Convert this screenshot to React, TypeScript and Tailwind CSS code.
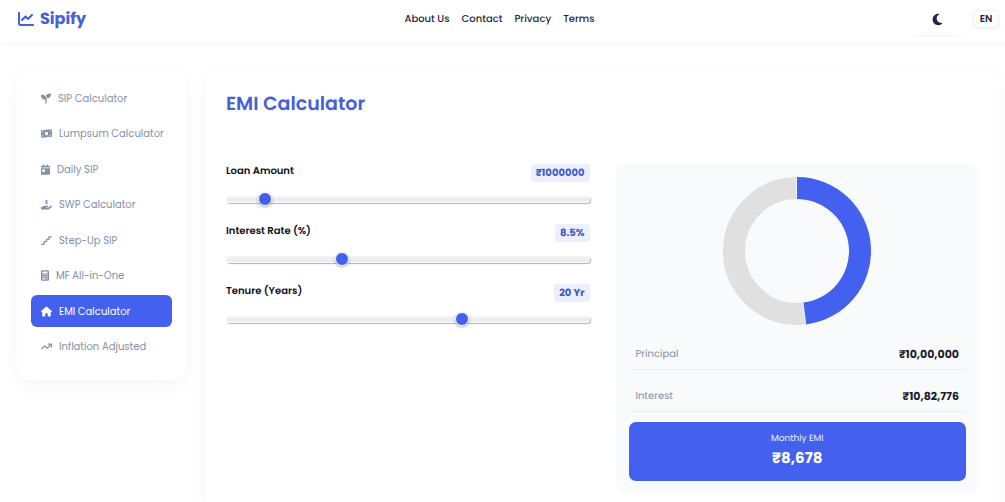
import { useState } from "react";
import type { IconType } from "react-icons";
import {
  FaArrowTrendUp,
  FaCalculator,
  FaCalendarDay,
  FaChartLine,
  FaHandHoldingDollar,
  FaHouse,
  FaMoneyBillWave,
  FaMoon,
  FaSeedling,
  FaStairs,
} from "react-icons/fa6";

const pages = ["About Us", "Contact", "Privacy", "Terms"];

const calculators: { name: string; icon: IconType; width: string }[] = [
  { name: "SIP Calculator", icon: FaSeedling, width: "w-[10px]" },
  { name: "Lumpsum Calculator", icon: FaMoneyBillWave, width: "w-[11px]" },
  { name: "Daily SIP", icon: FaCalendarDay, width: "w-[9px]" },
  { name: "SWP Calculator", icon: FaHandHoldingDollar, width: "w-[11px]" },
  { name: "Step-Up SIP", icon: FaStairs, width: "w-[11px]" },
  { name: "MF All-in-One", icon: FaCalculator, width: "w-[8px]" },
  { name: "EMI Calculator", icon: FaHouse, width: "w-[11px]" },
  { name: "Inflation Adjusted", icon: FaArrowTrendUp, width: "w-[11px]" },
];

const rupees = (n: number) => "₹" + Math.round(n).toLocaleString("en-IN");

function Header() {
  return (
    <header className="flex h-[42px] items-center justify-between bg-white pr-1.5 pl-[18px] shadow-[0_2px_6px_rgba(0,0,0,0.04)]">
      <a href="#home" className="flex items-center gap-1.5 pb-1 text-[16px] leading-6 font-bold text-[#4560d8]">
        <FaChartLine className="size-4" />
        Sipify
      </a>
      <nav className="flex gap-3 pb-1 text-[10px] leading-4 font-medium text-[#1f2937]">
        {pages.map((p) => (
          <a key={p} href={"#" + p.toLowerCase().replace(" ", "-")}>
            {p}
          </a>
        ))}
      </nav>
      <div className="flex items-center gap-2.5 pb-1">
        <button
          type="button"
          aria-label="Toggle dark mode"
          className="flex h-8 w-[50px] items-center justify-center rounded-[4px] text-[#1f2544] shadow-[0_1px_1px_rgba(0,0,0,0.05)]"
        >
          <FaMoon className="size-[13px]" />
        </button>
        <button
          type="button"
          className="h-[18px] w-[26px] rounded-[4px] border border-[#f0f0f2] bg-white text-[10px] leading-4 font-semibold text-[#1f2544] shadow-[0_1px_2px_rgba(0,0,0,0.06)]"
        >
          EN
        </button>
      </div>
    </header>
  );
}

function Sidebar({ active, onSelect }: { active: string; onSelect: (name: string) => void }) {
  return (
    <aside className="w-[169px] shrink-0 self-start rounded-[14px] bg-white px-3.5 pt-[13px] pb-[17px] shadow-[0_6px_20px_rgba(0,0,0,0.04)]">
      <ul className="flex min-h-[281px] flex-col justify-between">
        {calculators.map(({ name, icon: Icon, width }) => (
          <li key={name}>
            <button
              type="button"
              onClick={() => onSelect(name)}
              className={
                "flex h-8 w-full items-center gap-[7px] rounded-md px-2.5 text-left text-[10px] whitespace-nowrap " +
                (name === active ? "bg-[#4361ee] text-white" : "text-[#8490a5]")
              }
            >
              <Icon className={"h-[11px] shrink-0 " + width} />
              {name}
            </button>
          </li>
        ))}
      </ul>
    </aside>
  );
}

type FieldProps = {
  id: string;
  label: string;
  display: string;
  min: number;
  max: number;
  step: number;
  value: number;
  onChange: (n: number) => void;
};

function Field({ id, label, display, min, max, step, value, onChange }: FieldProps) {
  return (
    <div className="flex flex-col gap-[9px]">
      <div className="flex items-start justify-between">
        <label htmlFor={id} className="text-[10px] leading-[14px] font-semibold text-[#0b0f1a]">
          {label}
        </label>
        <output
          htmlFor={id}
          className="rounded-[3px] bg-[#ebefff] px-[5px] text-[10px] leading-[18px] font-bold text-[#4059c4]"
        >
          {display}
        </output>
      </div>
      <div className="flex h-4 items-center">
        <input
          id={id}
          type="range"
          min={min}
          max={max}
          step={step}
          value={value}
          onChange={(e) => onChange(Number(e.target.value))}
          className="h-[7px] w-full cursor-pointer appearance-none rounded-full bg-[#ebedf0] shadow-[inset_0_2px_0_#f4f4f5,inset_0_-1px_0_#fafafa,1px_1px_1px_#b4b4b4] outline-none [&::-webkit-slider-thumb]:size-3.5 [&::-webkit-slider-thumb]:appearance-none [&::-webkit-slider-thumb]:rounded-full [&::-webkit-slider-thumb]:border-[1px] [&::-webkit-slider-thumb]:border-solid [&::-webkit-slider-thumb]:border-white [&::-webkit-slider-thumb]:bg-[#4361ee] [&::-webkit-slider-thumb]:shadow-[0_1px_3px_rgba(0,0,0,0.3)]"
        />
      </div>
    </div>
  );
}

function Donut({ share }: { share: number }) {
  const a = share * 2 * Math.PI;
  const point = (r: number, t: number) => `${74 + r * Math.sin(t)} ${74 - r * Math.cos(t)}`;
  const large = share > 0.5 ? 1 : 0;
  const arc = `M${point(74, 0)}A74 74 0 ${large} 1 ${point(74, a)}L${point(52, a)}A52 52 0 ${large} 0 ${point(52, 0)}Z`;
  return (
    <svg viewBox="0 0 148 148" className="mx-auto size-[148px]" role="img" aria-label="Principal and interest shares">
      <circle cx="74" cy="74" r="63" fill="none" stroke="#e0e0e0" strokeWidth="22" />
      <path d={`M${point(52, 0)}L${point(74, 0)}M${point(52, a)}L${point(74, a)}`} stroke="#ffffff" strokeWidth="1" />
      <path d={arc} fill="#4361ee" />
    </svg>
  );
}

function ResultRow({ name, value }: { name: string; value: string }) {
  return (
    <div className="flex items-center justify-between border-b border-[#eceef1] px-[7px] pt-[11px] pb-[7px]">
      <dt className="text-[10px] leading-4 text-[#8490a5]">{name}</dt>
      <dd className="text-[11px] leading-4 font-bold text-[#1a1d2e]">{value}</dd>
    </div>
  );
}

export default function App() {
  const [active, setActive] = useState("EMI Calculator");
  const [loan, setLoan] = useState(1000000);
  const [rate, setRate] = useState(8.5);
  const [years, setYears] = useState(20);

  const monthly = rate / 1200;
  const growth = Math.pow(1 + monthly, years * 12);
  const emi = (loan * monthly * growth) / (growth - 1);
  const interest = emi * years * 12 - loan;

  return (
    <div className="flex min-h-screen flex-col bg-white font-['Poppins','Inter','Noto_Sans',sans-serif] [text-rendering:geometricPrecision]">
      <Header />
      <div className="flex grow gap-5 pt-[27px] pr-1.5 pl-[17px]">
        <Sidebar active={active} onSelect={setActive} />
        <main className="grow rounded-t-[14px] bg-white px-5 pt-[21px] pb-2 shadow-[0_6px_20px_rgba(0,0,0,0.04)]">
          <h1 className="text-[19px] leading-7 font-semibold text-[#4560d8]">EMI Calculator</h1>
          <div className="mt-[46px] grid grid-cols-2 gap-[26px]">
            <div className="flex flex-col gap-[17px]">
              <Field
                id="loan"
                label="Loan Amount"
                display={"₹" + loan}
                min={100000}
                max={10000000}
                step={10000}
                value={loan}
                onChange={setLoan}
              />
              <Field
                id="rate"
                label="Interest Rate (%)"
                display={rate + "%"}
                min={1}
                max={25}
                step={0.1}
                value={rate}
                onChange={setRate}
              />
              <Field
                id="years"
                label="Tenure (Years)"
                display={years + " Yr"}
                min={1}
                max={30}
                step={1}
                value={years}
                onChange={setYears}
              />
            </div>
            <section className="rounded-[10px] bg-[#f8fafc] p-[13px]">
              <Donut share={loan / (loan + interest)} />
              <dl className="mt-2.5 flex flex-col gap-[7px]">
                <ResultRow name="Principal" value={rupees(loan)} />
                <ResultRow name="Interest" value={rupees(interest)} />
              </dl>
              <div className="mt-2.5 rounded-[7px] bg-[#4361ee] py-2.5 text-center text-white">
                <p className="text-[9px] leading-[14px] text-[#eef1ff]">Monthly EMI</p>
                <p className="mt-px text-[15px] leading-6 font-bold">{rupees(emi)}</p>
              </div>
            </section>
          </div>
        </main>
      </div>
    </div>
  );
}
